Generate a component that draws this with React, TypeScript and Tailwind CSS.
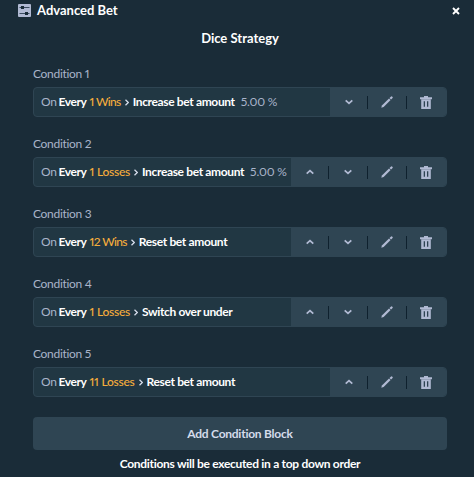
import React from "react";

interface Condition {
  count: number;
  outcome: "Wins" | "Losses";
  action: string;
  value?: string;
  up?: boolean;
  down?: boolean;
}

const conditions: Condition[] = [
  { count: 1, outcome: "Wins", action: "Increase bet amount", value: "5.00 %", down: true },
  { count: 1, outcome: "Losses", action: "Increase bet amount", value: "5.00 %", up: true, down: true },
  { count: 12, outcome: "Wins", action: "Reset bet amount", up: true, down: true },
  { count: 1, outcome: "Losses", action: "Switch over under", up: true, down: true },
  { count: 11, outcome: "Losses", action: "Reset bet amount", up: true },
];

const SlidersIcon = () => (
  <svg className="size-[13px] -mt-px" viewBox="0 0 13 13">
    <rect width="13" height="13" rx="1" fill="#b1bad3" />
    <path d="M1.5 3.5h10M1.5 9.5h10" stroke="#3b4c60" strokeWidth="1" />
    <rect x="3" y="2" width="3" height="3" fill="#1a2c38" />
    <rect x="7" y="8" width="3" height="3" fill="#1a2c38" />
  </svg>
);

const CloseIcon = () => (
  <svg className="size-2" viewBox="0 0 8 8" fill="none" stroke="#fff" strokeWidth="1.9">
    <path d="M1 1l6 6M7 1L1 7" />
  </svg>
);

const ChevronIcon = ({ up }: { up?: boolean }) => (
  <svg className="w-2 h-1.5" viewBox="0 0 8 6" fill="none" stroke="#b1bad3" strokeWidth="1.8">
    <path d={up ? "M0.7 4.6L4 1.6L7.3 4.6" : "M0.7 1.4L4 4.4L7.3 1.4"} />
  </svg>
);

const PencilIcon = () => (
  <svg className="size-3" viewBox="0 0 12 12" fill="#b1bad3">
    <path d="M0.3 11.7L0.9 9.4L8 2.4L9.6 4L2.6 11.1z" />
    <path d="M8.5 1.9L10.1 0.4Q10.6 0 11 0.4L11.6 1Q12 1.4 11.6 1.9L10.1 3.5z" />
  </svg>
);

const TrashIcon = () => (
  <svg className="w-3 h-[13px]" viewBox="0 0 12 13" fill="#b1bad3">
    <path d="M4 0h4v1.2h4v2H0v-2h4z" />
    <path
      fillRule="evenodd"
      d="M1.2 3.2h9.6V13H1.2zM3.7 5.2v5.6h1.3V5.2zM7 5.2v5.6h1.3V5.2z"
    />
  </svg>
);

const ConditionRow = ({ condition, index }: { condition: Condition; index: number }) => {
  const icons = [
    condition.up && <ChevronIcon key="up" up />,
    condition.down && <ChevronIcon key="down" />,
    <PencilIcon key="edit" />,
    <TrashIcon key="delete" />,
  ].filter(Boolean);

  return (
    <div className="h-[70px]">
      <h3 className="h-5 leading-5 text-[12px] text-[#a9b4ca] tracking-[-0.3px]">
        Condition {index + 1}
      </h3>
      <div className="mt-[3px] h-[30px] flex justify-between rounded-sm border border-[#2f4553] bg-[#213743] overflow-hidden">
        <div className="flex items-center pl-[7px] text-[12px] whitespace-nowrap">
          <span className="w-[17.5px] text-[#a9b4ca] tracking-[-0.2px]">On</span>
          <span className="font-bold text-white tracking-[-0.4px] mr-[3px]">Every</span>
          <span
            className={
              condition.outcome === "Wins"
                ? "font-medium text-[#f5ad3c] tracking-[-0.65px] mr-1"
                : "font-medium text-[#f5ad3c] tracking-[-0.25px] mr-1"
            }
          >
            {condition.count} {condition.outcome}
          </span>
          <svg className="w-1 h-[7px] mr-1" viewBox="0 0 4 7" fill="none" stroke="#d5dceb">
            <path d="M0.5 0.8L3.3 3.5L0.5 6.2" strokeWidth="1.3" />
          </svg>
          <span className="font-bold text-white tracking-[-0.36px]">{condition.action}</span>
          {condition.value && (
            <span className="ml-1.5 text-[#a9b4ca] tracking-[-0.2px]">{condition.value}</span>
          )}
        </div>
        <div className="shrink-0 flex items-center bg-[#2f4553]">
          {icons.map((icon, idx) => (
            <React.Fragment key={idx}>
              {idx > 0 && <div className="w-px h-[13px] bg-[#0f212e]" />}
              <button
                className={
                  idx === 0
                    ? "w-[37px] h-full flex items-center justify-center"
                    : idx === icons.length - 1
                      ? "w-[39px] h-full pr-px flex items-center justify-center"
                      : "w-[38px] h-full flex items-center justify-center"
                }
              >
                {icon}
              </button>
            </React.Fragment>
          ))}
        </div>
      </div>
    </div>
  );
};

const App = () => {
  return (
    <div className="w-[474px] h-[477px] bg-[#1a2c38] overflow-hidden proportional-nums font-['Lato','Liberation_Sans',sans-serif]">
      <header className="h-[22px] flex items-center pl-[18px] pr-[14px]">
        <SlidersIcon />
        <h1 className="ml-1.5 text-[13px] font-bold text-white">Advanced Bet</h1>
        <button className="ml-auto">
          <CloseIcon />
        </button>
      </header>
      <main className="pl-[33px] pr-[27px]">
        <h2 className="h-[42px] pt-1.5 leading-5 text-center text-[13px] font-bold text-white">
          Dice Strategy
        </h2>
        {conditions.map((condition, idx) => (
          <ConditionRow key={idx} condition={condition} index={idx} />
        ))}
        <button className="mt-[3px] w-full h-[33px] rounded-sm bg-[#2f4553] text-[12px] font-bold text-[#d5dceb] tracking-[-0.25px]">
          Add Condition Block
        </button>
        <p className="mt-1 leading-5 text-center text-[12px] font-bold text-white tracking-[-0.3px]">
          Conditions will be executed in a top down order
        </p>
      </main>
    </div>
  );
};

export default App;
